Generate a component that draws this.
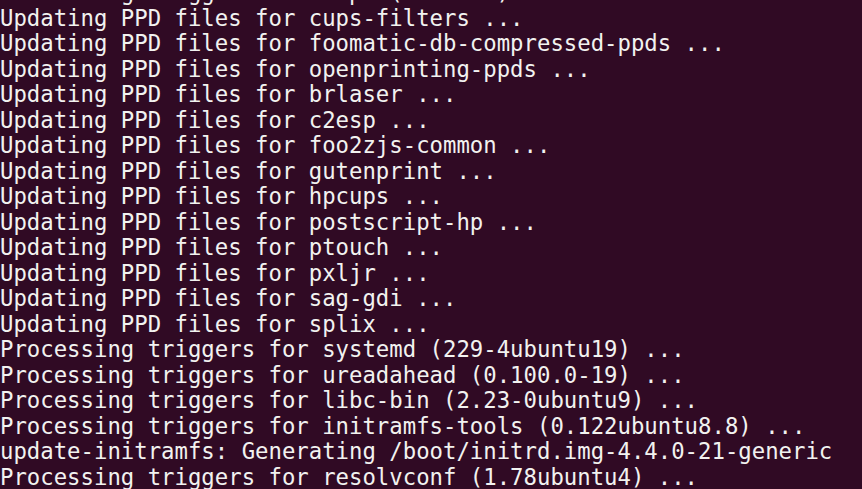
const lines = [
    'Processing triggers for cups (2.1.3-4) ...',
    'Updating PPD files for cups-filters ...',
    'Updating PPD files for foomatic-db-compressed-ppds ...',
    'Updating PPD files for openprinting-ppds ...',
    'Updating PPD files for brlaser ...',
    'Updating PPD files for c2esp ...',
    'Updating PPD files for foo2zjs-common ...',
    'Updating PPD files for gutenprint ...',
    'Updating PPD files for hpcups ...',
    'Updating PPD files for postscript-hp ...',
    'Updating PPD files for ptouch ...',
    'Updating PPD files for pxljr ...',
    'Updating PPD files for sag-gdi ...',
    'Updating PPD files for splix ...',
    'Processing triggers for systemd (229-4ubuntu19) ...',
    'Processing triggers for ureadahead (0.100.0-19) ...',
    'Processing triggers for libc-bin (2.23-0ubuntu9) ...',
    'Processing triggers for initramfs-tools (0.122ubuntu8.8) ...',
    'update-initramfs: Generating /boot/initrd.img-4.4.0-21-generic',
    'Processing triggers for resolvconf (1.78ubuntu4) ...',
];

const App = () => {
    return (
        <div className="w-[862px] h-[489px] overflow-hidden bg-[#300a24]">
            <div className="-mt-[20px] font-['DejaVu_Sans_Mono',monospace] text-[22.3px] leading-[25.5px] text-[#f2f2f0] whitespace-pre">
                {lines.map((line, i) => (
                    <div key={i}>{line}</div>
                ))}
            </div>
        </div>
    );
};

export default App;
